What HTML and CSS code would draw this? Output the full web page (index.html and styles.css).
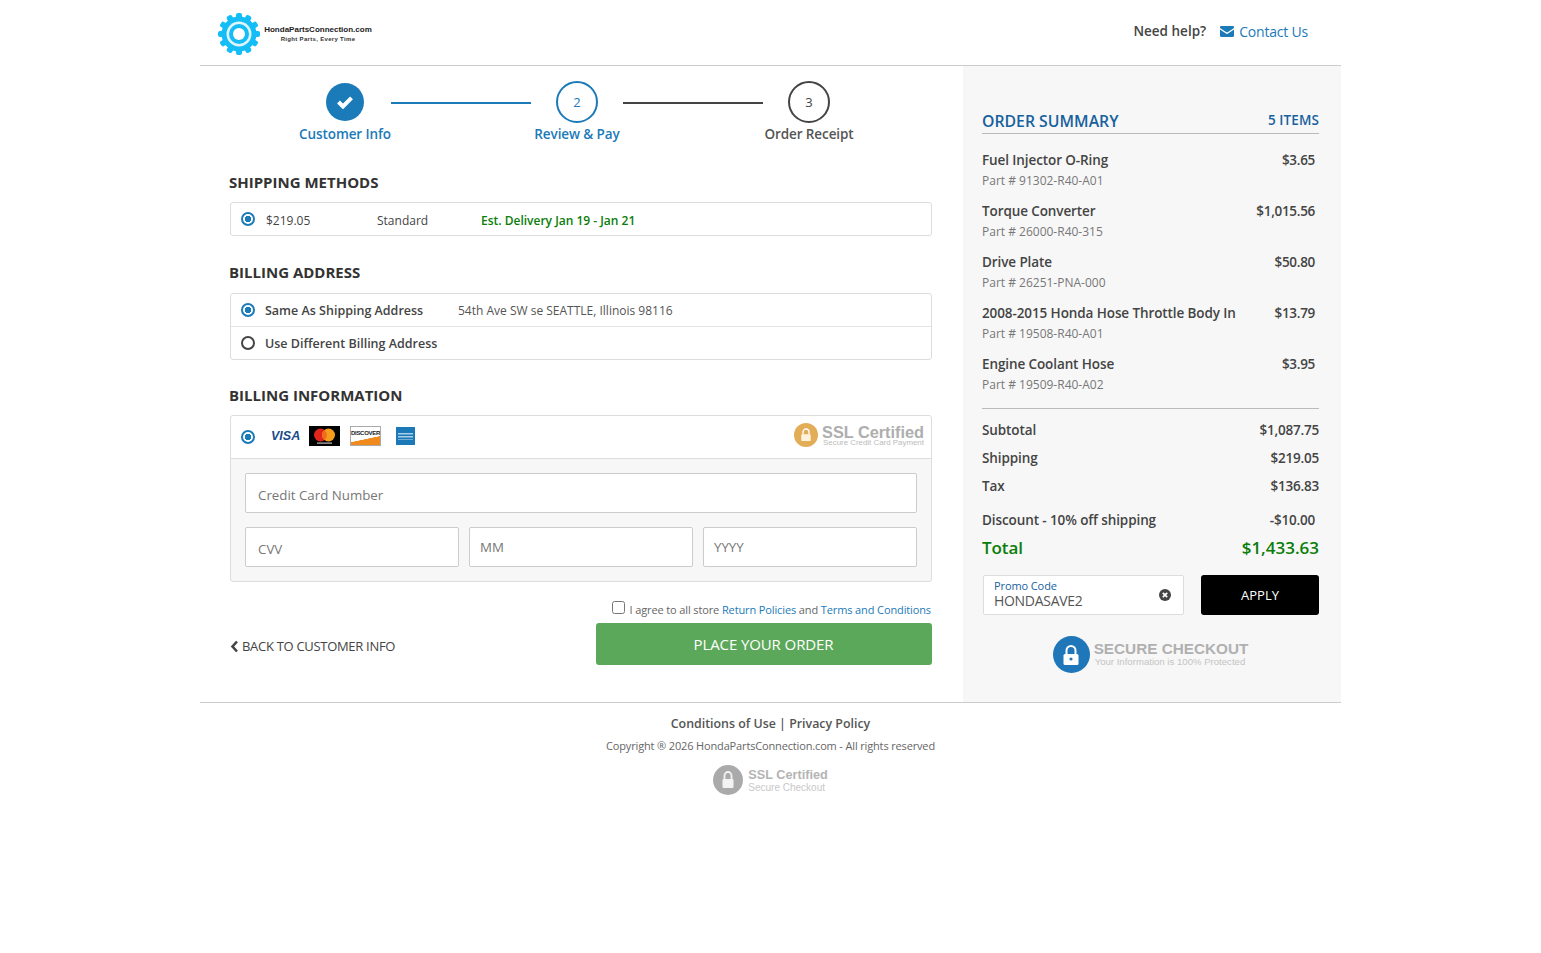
FILE: index.html
```html
<!DOCTYPE html>
<html lang="en">
<head>
<meta charset="utf-8">
<title>Checkout</title>
<link rel="stylesheet" href="styles.css">
</head>
<body>
<div class="page">
  <header class="header">
    <div class="logo">
      <svg class="gear" viewBox="0 0 44 44" width="44" height="44">
        <g fill="#14bdf5">
          <circle cx="22" cy="22" r="17.500"/>
          <rect x="19" y="1" width="6" height="42" rx="2"/>
          <rect x="19" y="1" width="6" height="42" rx="2" transform="rotate(30 22 22)"/>
          <rect x="19" y="1" width="6" height="42" rx="2" transform="rotate(60 22 22)"/>
          <rect x="19" y="1" width="6" height="42" rx="2" transform="rotate(90 22 22)"/>
          <rect x="19" y="1" width="6" height="42" rx="2" transform="rotate(120 22 22)"/>
          <rect x="19" y="1" width="6" height="42" rx="2" transform="rotate(150 22 22)"/>
        </g>
        <circle cx="22" cy="22" r="12.500" fill="#dff5fd"/>
        <circle cx="22" cy="22" r="10" fill="#14bdf5"/>
        <circle cx="22" cy="22" r="6" fill="#fff"/>
      </svg>
      <div class="logo-text">
        <div class="logo-name">HondaPartsConnection.com</div>
        <div class="logo-tag">Right Parts, Every Time</div>
      </div>
    </div>
    <div class="help">
      <span>Need help?</span>
      <a class="contact">
        <svg viewBox="0 0 14 11" width="14" height="11"><path fill="#1b7ab8" d="M1.2 0h11.6C13.5 0 14 .5 14 1.2c0 .5-.3.9-.7 1.2L7.600 6.200c-.4.2-.8.2-1.200 0L.7 2.400C.3 2.100 0 1.700 0 1.200 0 .5.5 0 1.200 0zM0 3.600l6 4c.6.4 1.400.4 2 0l6-4v6.200c0 .7-.5 1.200-1.200 1.200H1.200C.5 11 0 10.500 0 9.800z"/></svg>
        Contact Us
      </a>
    </div>
  </header>

  <main class="columns">
    <section class="left">
      <div class="steps">
        <div class="step step-done">
          <div class="circle circle-done">
            <svg viewBox="0 0 18 14" width="18" height="14"><path d="M2.500 7l4.500 4.500L15.500 2.800" fill="none" stroke="#fff" stroke-width="4"/></svg>
          </div>
          <div class="step-label">Customer Info</div>
        </div>
        <div class="step-line step-line-blue"></div>
        <div class="step step-active">
          <div class="circle circle-blue">2</div>
          <div class="step-label">Review &amp; Pay</div>
        </div>
        <div class="step-line"></div>
        <div class="step">
          <div class="circle">3</div>
          <div class="step-label">Order Receipt</div>
        </div>
      </div>

      <h2 class="heading heading-shipping">Shipping Methods</h2>
      <div class="panel">
        <div class="row">
          <span class="radio radio-on"></span>
          <span class="ship-price">$219.05</span>
          <span class="ship-name">Standard</span>
          <span class="ship-date">Est. Delivery Jan 19 - Jan 21</span>
        </div>
      </div>

      <h2 class="heading heading-billing">Billing Address</h2>
      <div class="panel">
        <div class="row row-divided">
          <span class="radio radio-on"></span>
          <span class="addr-label">Same As Shipping Address</span>
          <span class="addr-value">54th Ave SW se SEATTLE, Illinois 98116</span>
        </div>
        <div class="row">
          <span class="radio"></span>
          <span class="addr-label">Use Different Billing Address</span>
        </div>
      </div>

      <h2 class="heading heading-info">Billing Information</h2>
      <div class="panel card-panel">
        <div class="card-top">
          <span class="radio radio-on"></span>
          <div class="cards">
            <span class="visa">VISA</span>
            <svg class="mc" viewBox="0 0 31 20" width="31" height="20"><rect width="31" height="20" fill="#000"/><circle cx="11.500" cy="9" r="6.500" fill="#e0261c"/><circle cx="19.500" cy="9" r="6.500" fill="#f59e1e"/><path d="M15.500 3.900a6.500 6.500 0 0 1 0 10.200a6.500 6.500 0 0 1 0-10.200z" fill="#f26a1b"/><rect x="8" y="16.500" width="15" height="1.200" fill="#bbb"/></svg>
            <div class="discover"><span class="discover-text">DISCOVER</span></div>
            <svg class="amex" viewBox="0 0 19 18" width="19" height="18"><rect width="19" height="18" fill="#1c79b8"/><rect x="2" y="6" width="15" height="1.500" fill="#a9cfe8"/><rect x="2" y="9" width="15" height="1.500" fill="#a9cfe8"/><rect x="2" y="12" width="15" height="1" fill="#6fadd6"/></svg>
          </div>
          <div class="ssl ssl-card">
            <span class="ssl-dot ssl-dot-gold">
              <svg viewBox="0 0 14 16" width="12" height="14"><path d="M3.500 7V4.500a3.500 3.500 0 0 1 7 0V7" fill="none" stroke="#fff" stroke-width="1.600"/><rect x="1.500" y="7" width="11" height="8" rx="1" fill="#fdf3dc"/></svg>
            </span>
            <div>
              <div class="ssl-title">SSL Certified</div>
              <div class="ssl-sub">Secure Credit Card Payment</div>
            </div>
          </div>
        </div>
        <div class="card-form">
          <input class="field field-full" type="text" placeholder="Credit Card Number">
          <div class="field-row">
            <input class="field field-cvv" type="text" placeholder="CVV">
            <input class="field field-small" type="text" placeholder="MM">
            <input class="field field-small" type="text" placeholder="YYYY">
          </div>
        </div>
      </div>

      <div class="agree">
        <input class="check" type="checkbox">
        <span>I agree to all store <a class="link">Return Policies</a> and <a class="link">Terms and Conditions</a></span>
      </div>
      <div class="actions">
        <a class="back">
          <svg viewBox="0 0 9 13" width="9" height="13"><path d="M7 1.500L2.500 6.500 7 11.500" fill="none" stroke="#444" stroke-width="2.600"/></svg>
          Back to Customer Info
        </a>
        <button class="place" type="button">Place Your Order</button>
      </div>
    </section>

    <aside class="right">
      <div class="summary-head">
        <span class="summary-title">Order Summary</span>
        <span class="summary-count">5 Items</span>
      </div>
      <ul class="items">
        <li class="item"><div class="item-main"><span class="item-name">Fuel Injector O-Ring</span><span class="item-price">$3.65</span></div><div class="item-part">Part # 91302-R40-A01</div></li>
        <li class="item"><div class="item-main"><span class="item-name">Torque Converter</span><span class="item-price">$1,015.56</span></div><div class="item-part">Part # 26000-R40-315</div></li>
        <li class="item"><div class="item-main"><span class="item-name">Drive Plate</span><span class="item-price">$50.80</span></div><div class="item-part">Part # 26251-PNA-000</div></li>
        <li class="item"><div class="item-main"><span class="item-name">2008-2015 Honda Hose Throttle Body In</span><span class="item-price">$13.79</span></div><div class="item-part">Part # 19508-R40-A01</div></li>
        <li class="item"><div class="item-main"><span class="item-name">Engine Coolant Hose</span><span class="item-price">$3.95</span></div><div class="item-part">Part # 19509-R40-A02</div></li>
      </ul>
      <div class="totals">
        <div class="total-row"><span>Subtotal</span><span>$1,087.75</span></div>
        <div class="total-row"><span>Shipping</span><span>$219.05</span></div>
        <div class="total-row"><span>Tax</span><span>$136.83</span></div>
        <div class="total-row total-discount"><span>Discount - 10% off shipping</span><span class="discount-val">-$10.00</span></div>
        <div class="total-row total-grand"><span>Total</span><span>$1,433.63</span></div>
      </div>
      <div class="promo">
        <div class="promo-box">
          <div>
            <div class="promo-label">Promo Code</div>
            <div class="promo-value">HONDASAVE2</div>
          </div>
          <svg class="promo-x" viewBox="0 0 12 12" width="12" height="12"><circle cx="6" cy="6" r="6" fill="#444"/><path d="M3.800 3.800l4.400 4.400M8.200 3.800L3.800 8.200" stroke="#fff" stroke-width="1.800"/></svg>
        </div>
        <button class="apply" type="button">APPLY</button>
      </div>
      <div class="secure">
        <span class="secure-dot">
          <svg viewBox="0 0 18 22" width="18" height="22"><path d="M4.500 10V6.500a4.500 4.500 0 0 1 9 0V10" fill="none" stroke="#fff" stroke-width="2"/><rect x="1.500" y="10" width="15" height="11" rx="1.500" fill="#fff"/><circle cx="9" cy="15" r="1.600" fill="#1f76b8"/></svg>
        </span>
        <div>
          <div class="secure-title">SECURE CHECKOUT</div>
          <div class="secure-sub">Your Information is 100% Protected</div>
        </div>
      </div>
    </aside>
  </main>

  <footer class="footer">
    <div class="footer-links">Conditions of Use | Privacy Policy</div>
    <div class="copyright">Copyright ® 2026 HondaPartsConnection.com - All rights reserved</div>
    <div class="ssl ssl-footer">
      <span class="ssl-dot ssl-dot-gray">
        <svg viewBox="0 0 14 18" width="14" height="18"><path d="M3.500 8V4.500a3.500 3.500 0 0 1 7 0V8" fill="none" stroke="#f3f3f3" stroke-width="1.800"/><rect x="1.500" y="8" width="11" height="9" rx="1" fill="#f3f3f3"/></svg>
      </span>
      <div class="ssl-footer-text">
        <div class="ssl-title ssl-title-footer">SSL Certified</div>
        <div class="ssl-sub ssl-sub-footer">Secure Checkout</div>
      </div>
    </div>
  </footer>
</div>
</body>
</html>
```
FILE: styles.css
```css
* { box-sizing: border-box; }
html, body { margin: 0; padding: 0; background: #fff; }
body { font-family: "Open Sans", sans-serif; font-size: 13px; color: #444; min-height: 953px; }
a { text-decoration: none; }

.page { width: 1141px; margin: 0 0 0 200px; }

.header { height: 66px; border-bottom: 1px solid #ccc; display: flex; justify-content: space-between; align-items: flex-start; padding: 12px 33px 0 17px; }
.logo { display: flex; align-items: center; gap: 3px; }
.gear { display: block; }
.logo-text { text-align: center; color: #222; width: 108px; }
.logo-name { font-family: "Liberation Sans", sans-serif; font-size: 8px; font-weight: 700; line-height: 10px; white-space: nowrap; }
.logo-tag { font-family: "Liberation Sans", sans-serif; font-size: 6px; font-weight: 700; line-height: 8px; white-space: nowrap; color: #333; letter-spacing: 0.32px; }
.help { display: flex; gap: 14px; font-size: 13.500px; line-height: 19px; color: #444; padding-top: 10px; font-weight: 600; }
.contact { color: #1b7ab8; display: flex; align-items: center; gap: 5px; font-weight: 500; font-size: 14px; line-height: 17px; height: 19px; letter-spacing: -0.2px; }

.columns { display: flex; height: 637px; border-bottom: 1px solid #ccc; }
.left { width: 762px; padding: 0 30px; flex: none; }
.right { flex: 1; background: #f7f7f7; margin-left: 1px; padding: 0 22px 0 19px; }

.steps { display: flex; align-items: flex-start; margin: 15px 0 0 69px; width: 556px; }
.step { width: 92px; flex: none; display: flex; flex-direction: column; align-items: center; }
.circle { width: 42px; height: 42px; border-radius: 50%; border: 2px solid #444; display: flex; align-items: center; justify-content: center; font-size: 13px; color: #444; background: #fff; }
.circle-blue { border-color: #1b7ab8; color: #1b7ab8; }
.circle-done { width: 38px; height: 38px; margin: 2px 0; background: #1b7ab8; border: 0; }
.step-label { font-size: 13.500px; line-height: 19px; margin-top: 2px; white-space: nowrap; font-weight: 600; color: #555; letter-spacing: -0.1px; }
.step-done .step-label, .step-active .step-label { color: #1b7ab8; }
.step-line { flex: 1; height: 2px; background: #444; margin-top: 21px; }
.step-line-blue { background: #1b7ab8; }

.heading { font-size: 15px; line-height: 22px; font-weight: 700; color: #333; text-transform: uppercase; margin: 0; }
.heading-shipping { margin: 27px 0 9px -1px; }
.heading-billing { margin: 25px 0 10px -1px; }
.heading-info { margin: 24px 0 9px -1px; }

.panel { border: 1px solid #ddd; border-radius: 3px; background: #fff; }
.row { display: flex; align-items: center; height: 32px; padding-left: 10px; }
.row-divided { height: 33px; border-bottom: 1px solid #e5e5e5; }
.radio { width: 14px; height: 14px; border-radius: 50%; border: 2px solid #444; flex: none; background: #fff; }
.radio-on { border-color: #1b7ab8; background: radial-gradient(circle, #1b7ab8 0 3px, #fff 3.500px); }
.ship-price { width: 111px; margin: 2px 0 0 11px; font-size: 12px; font-weight: 500; }
.ship-name { width: 104px; margin-top: 2px; font-size: 12px; }
.ship-date { color: #0a7d0a; margin-top: 2px; font-size: 12px; font-weight: 600; }
.addr-label { width: 193px; margin-left: 10px; font-size: 12.500px; font-weight: 600; white-space: nowrap; }
.addr-value { font-size: 12px; color: #555; }

.card-panel { background: #f7f7f7; }
.card-top { height: 43px; background: #fff; border-bottom: 1px solid #ddd; display: flex; align-items: center; padding: 0 7px 0 10px; border-radius: 3px 3px 0 0; }
.cards { display: flex; align-items: center; margin: -2px 0 0 16px; flex: 1; }
.visa { font-family: "Liberation Sans", sans-serif; font-style: italic; font-weight: 700; font-size: 12.500px; color: #1a4a8a; width: 38px; }
.mc { display: block; margin-right: 10px; }
.discover { width: 31px; height: 20px; border: 1px solid #aaa; background: linear-gradient(168deg, #fff 62%, #f08a1d 64%); margin-right: 15px; display: flex; justify-content: center; padding-top: 3px; overflow: hidden; }
.discover-text { font-family: "Liberation Sans", sans-serif; font-size: 6px; line-height: 7px; font-weight: 700; color: #222; letter-spacing: -0.3px; white-space: nowrap; }
.amex { display: block; }

.ssl { display: flex; align-items: center; }
.ssl-card { gap: 4px; margin-top: -4px; }
.ssl-dot { border-radius: 50%; display: flex; align-items: center; justify-content: center; flex: none; }
.ssl-dot-gold { width: 24px; height: 24px; background: #e3ad58; }
.ssl-dot-gray { width: 30px; height: 30px; background: #aaa; }
.ssl-title { font-family: "Liberation Sans", sans-serif; font-weight: 700; font-size: 16.300px; line-height: 15px; color: #aeaeae; white-space: nowrap; }
.ssl-sub { font-family: "Liberation Sans", sans-serif; font-size: 7.900px; line-height: 6px; color: #bbb; white-space: nowrap; padding-left: 1px; }

.card-form { padding: 14px; display: flex; flex-direction: column; gap: 14px; }
.field { height: 40px; border: 1px solid #ccc; border-radius: 2px; background: #fff; font: 13.300px "Open Sans", sans-serif; padding: 0 12px; outline: 0; }
.field::placeholder { color: #777; opacity: 1; }
.field-full { width: 100%; padding-top: 3px; }
.field-row { display: flex; gap: 10px; }
.field-cvv { width: 214px; padding-top: 3px; }
.field-small { width: 224px; padding: 0 10px; }
.field-small:last-child { width: 214px; }

.agree { display: flex; justify-content: flex-end; align-items: center; gap: 4px; margin-top: 17px; padding-right: 1px; font-size: 11px; line-height: 15px; color: #666; height: 20px; letter-spacing: -0.12px; }
.check { width: 13px; height: 13px; margin: 0 0 3px; }
.link { color: #1b7ab8; }
.actions { display: flex; justify-content: space-between; align-items: center; margin-top: 4px; }
.back { color: #444; font-size: 13px; text-transform: uppercase; display: flex; align-items: center; gap: 3px; letter-spacing: -0.3px; margin-top: 4px; }
.place { width: 336px; height: 42px; border: 0; border-radius: 3px; background: #5ca85a; color: #fff; font: 15px "Open Sans", sans-serif; letter-spacing: -0.1px; text-transform: uppercase; padding: 0 1px 0 0; }

.summary-head { display: flex; justify-content: space-between; align-items: flex-end; margin-top: 44px; height: 24px; border-bottom: 1px solid #bbb; padding-bottom: 1px; }
.summary-title { color: #17629d; font-size: 15.800px; line-height: 22px; font-weight: 600; text-transform: uppercase; }
.summary-count { color: #17629d; font-size: 13.500px; line-height: 22px; font-weight: 600; text-transform: uppercase; position: relative; top: -1px; letter-spacing: 0.1px; }
.items { list-style: none; margin: 16px 0 0; padding: 0 0 3px; border-bottom: 1px solid #bbb; }
.item { height: 51px; }
.item-main { display: flex; justify-content: space-between; padding-right: 4px; font-size: 13.500px; line-height: 20px; color: #444; font-weight: 600; letter-spacing: -0.1px; }
.item-price { font-size: 13.500px; letter-spacing: -0.3px; }
.item-part { font-size: 12px; line-height: 20px; color: #777; margin-top: 1px; }
.totals { padding-top: 9px; }
.total-row { display: flex; justify-content: space-between; height: 28px; font-size: 13.500px; line-height: 24px; font-weight: 600; color: #444; letter-spacing: -0.1px; }
.total-row span:last-child { font-size: 13.500px; letter-spacing: -0.2px; }
.total-discount { margin-top: 6px; height: 26px; }
.discount-val { padding-right: 4px; }
.total-grand { color: #0a7d0a; font-size: 17px; font-weight: 600; height: 28px; line-height: 28px; }
.total-row.total-grand span:last-child { font-size: 17px; letter-spacing: 0; }

.promo { display: flex; justify-content: space-between; margin-top: 13px; padding-left: 1px; }
.promo-box { width: 201px; height: 40px; border: 1px solid #ddd; background: #fff; display: flex; justify-content: space-between; align-items: center; padding: 0 12px 0 10px; border-radius: 2px; }
.promo-label { color: #17629d; font-size: 11px; line-height: 12px; letter-spacing: -0.1px; }
.promo-value { color: #555; font-size: 14px; line-height: 18px; letter-spacing: -0.3px; }
.apply { width: 118px; height: 40px; border: 0; background: #000; color: #fff; border-radius: 3px; font: 500 13px "Open Sans", sans-serif; padding: 0; }

.secure { display: flex; align-items: center; justify-content: center; gap: 4px; margin-top: 21px; }
.secure-dot { width: 37px; height: 37px; border-radius: 50%; background: #1f76b8; display: flex; align-items: center; justify-content: center; flex: none; }
.secure-title { font-family: "Liberation Sans", sans-serif; font-weight: 700; font-size: 15.300px; line-height: 15px; color: #b0b0b0; white-space: nowrap; }
.secure-sub { font-family: "Liberation Sans", sans-serif; font-size: 9.600px; line-height: 12px; color: #c4c4c4; white-space: nowrap; padding-left: 1px; }

.footer { display: flex; flex-direction: column; align-items: center; padding-top: 11px; }
.footer-links { font-size: 12.400px; line-height: 19px; font-weight: 600; color: #555; }
.copyright { font-size: 11px; line-height: 15px; color: #666; margin-top: 5px; letter-spacing: -0.15px; }
.ssl-footer { margin-top: 12px; gap: 5px; }
.ssl-footer-text { padding-top: 2px; }
.ssl-title-footer { font-size: 12.700px; line-height: 13px; color: #b4b4b4; }
.ssl-sub-footer { font-size: 10px; line-height: 11px; color: #c8c8c8; padding-left: 0; }
```
